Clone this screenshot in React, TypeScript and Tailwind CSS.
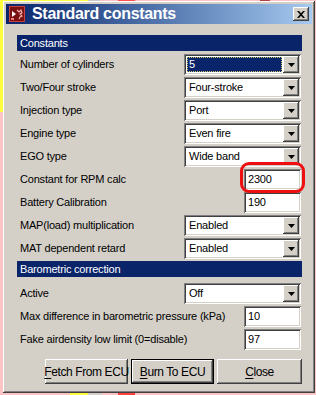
import React from "react";

const raised =
  "shadow-[inset_-1px_-1px_#404040,inset_1px_1px_#ffffff,inset_-2px_-2px_#808080,inset_2px_2px_#d4d0c8]";
const sunken =
  "shadow-[inset_1px_1px_#808080,inset_-1px_-1px_#ffffff,inset_2px_2px_#404040,inset_-2px_-2px_#d4d0c8]";

function Arrow() {
  return (
    <svg width="7" height="4" viewBox="0 0 7 4">
      <path d="M0 0h7L3.5 4z" fill="#000" />
    </svg>
  );
}

function Combo({ value, selected }: { value: string; selected?: boolean }) {
  return (
    <div className={`w-[117px] h-[21px] bg-white p-[2px] flex ${sunken}`}>
      <div className="flex-1 flex items-stretch p-[1px]">
        {selected ? (
          <div className="flex-1 flex items-center bg-[#0a246a] text-white pl-[2px] outline outline-1 outline-dotted outline-[#d6c86a] -outline-offset-1">
            {value}
          </div>
        ) : (
          <div className="flex-1 flex items-center pl-[2px]">{value}</div>
        )}
      </div>
      <div className={`w-[16px] h-full bg-[#d4d0c8] flex items-center justify-center ${raised}`}>
        <Arrow />
      </div>
    </div>
  );
}

function TextBox({ value }: { value: string }) {
  return (
    <div className={`w-[57px] h-[21px] bg-white flex items-center pl-[4px] ${sunken}`}>{value}</div>
  );
}

function Row({ label, children }: { label: string; children: React.ReactNode }) {
  return (
    <div className="flex items-center justify-between h-[21px] pl-[3px] pr-[1px]">
      <span className="whitespace-nowrap">{label}</span>
      {children}
    </div>
  );
}

function Header({ title }: { title: string }) {
  return (
    <div className="h-[16px] bg-[#0a246a] text-white flex items-center pl-[3px]">{title}</div>
  );
}

function Btn({ label, w, def }: { label: string; w: string; def?: boolean }) {
  const first = label[0];
  const rest = label.slice(1);
  return (
    <div
      className={`${w} h-[25px] bg-[#d4d0c8] flex items-center justify-center ${
        def
          ? "border border-black shadow-[inset_-1px_-1px_#404040,inset_1px_1px_#ffffff,inset_-2px_-2px_#808080]"
          : raised
      }`}
    >
      <span className="text-[12px] tracking-[-0.4px] whitespace-nowrap">
        <span className="underline underline-offset-2">{first}</span>
        {rest}
      </span>
    </div>
  );
}

function AppIcon() {
  return (
    <svg width="16" height="16" viewBox="0 0 16 16">
      <rect x="0" y="0" width="16" height="16" fill="#7a1010" />
      <rect x="0.5" y="0.5" width="15" height="15" fill="none" stroke="#c84040" />
      <path d="M3 5l4 3-4 3z" fill="#ffffff" />
      <path d="M8 4l2 2 2-2 1 3-2 1 2 2-2 1-1 2" stroke="#f0b0b0" strokeWidth="1.2" fill="none" />
      <rect x="2" y="12" width="3" height="2" fill="#f08080" />
    </svg>
  );
}

export default function App() {
  return (
    <div className="relative w-[316px] h-[395px] overflow-hidden bg-[#fcc4c4] font-['Liberation_Sans',Arial,sans-serif] text-[11px] tracking-[-0.2px] text-black">
      {/* desktop behind the dialog */}
      <div className="absolute left-0 top-0 w-[88px] h-[3px] bg-[#ffff40]" />
      <div className="absolute left-[88px] top-0 w-[12px] h-[3px] bg-[#c8c8c8]" />
      <div className="absolute left-[118px] top-0 w-[17px] h-[3px] bg-[#ff5050]" />
      <div className="absolute left-[260px] top-0 w-[10px] h-[3px] bg-[#b04040]" />
      <div className="absolute left-0 top-0 w-[3px] h-[112px] bg-[#ffff40]" />
      <div className="absolute left-[70px] top-[392px] w-[18px] h-[3px] bg-[#ffff40]" />
      <div className="absolute left-[88px] top-[392px] w-[14px] h-[3px] bg-[#d4d0c8]" />
      <div className="absolute left-[118px] top-[392px] w-[17px] h-[3px] bg-[#ff4040]" />

      <div className={`absolute left-[3px] top-[1px] w-[312px] h-[392px] bg-[#d4d0c8] p-[3px] flex flex-col ${raised}`}>
        <div className="h-[20px] shrink-0 bg-gradient-to-r from-[#0a246a] to-[#a6caf0] flex items-center pl-[3px] pr-[3px]">
          <AppIcon />
          <span className="ml-[7px] text-white font-bold text-[16px] tracking-[-0.3px] leading-none">
            Standard constants
          </span>
          <div className={`ml-auto w-[16px] h-[14px] bg-[#d4d0c8] flex items-center justify-center ${raised}`}>
            <svg width="8" height="7" viewBox="0 0 8 7">
              <path d="M0 0h2l2 2.3L6 0h2L5 3.5 8 7H6L4 4.7 2 7H0l3-3.5z" fill="#000" />
            </svg>
          </div>
        </div>

        <div className="flex flex-col pl-[11px] pr-[10px] pt-[11px]">
          <Header title="Constants" />
          <div className="flex flex-col gap-[2px] mt-[3px]">
            <Row label="Number of cylinders">
              <Combo value="5" selected />
            </Row>
            <Row label="Two/Four stroke">
              <Combo value="Four-stroke" />
            </Row>
            <Row label="Injection type">
              <Combo value="Port" />
            </Row>
            <Row label="Engine type">
              <Combo value="Even fire" />
            </Row>
            <Row label="EGO type">
              <Combo value="Wide band" />
            </Row>
            <Row label="Constant for RPM calc">
              <div className="relative">
                <TextBox value="2300" />
                <div className="absolute -left-[4px] -top-[7px] w-[65px] h-[31px] border-[3px] border-[#ee1010] rounded-[9px]" />
              </div>
            </Row>
            <Row label="Battery Calibration">
              <TextBox value="190" />
            </Row>
            <Row label="MAP(load) multiplication">
              <Combo value="Enabled" />
            </Row>
            <Row label="MAT dependent retard">
              <Combo value="Enabled" />
            </Row>
          </div>

          <div className="mt-[2px]">
            <Header title="Barometric correction" />
          </div>
          <div className="flex flex-col gap-[2px] mt-[6px]">
            <Row label="Active">
              <Combo value="Off" />
            </Row>
            <Row label="Max difference in barometric pressure (kPa)">
              <TextBox value="10" />
            </Row>
            <Row label="Fake airdensity low limit (0=disable)">
              <TextBox value="97" />
            </Row>
          </div>

          <div className="flex justify-end gap-[3px] mt-[9px]">
            <Btn label="Fetch From ECU" w="w-[83px]" />
            <Btn label="Burn To ECU" w="w-[83px]" def />
            <Btn label="Close" w="w-[85px]" />
          </div>
        </div>
      </div>
    </div>
  );
}
